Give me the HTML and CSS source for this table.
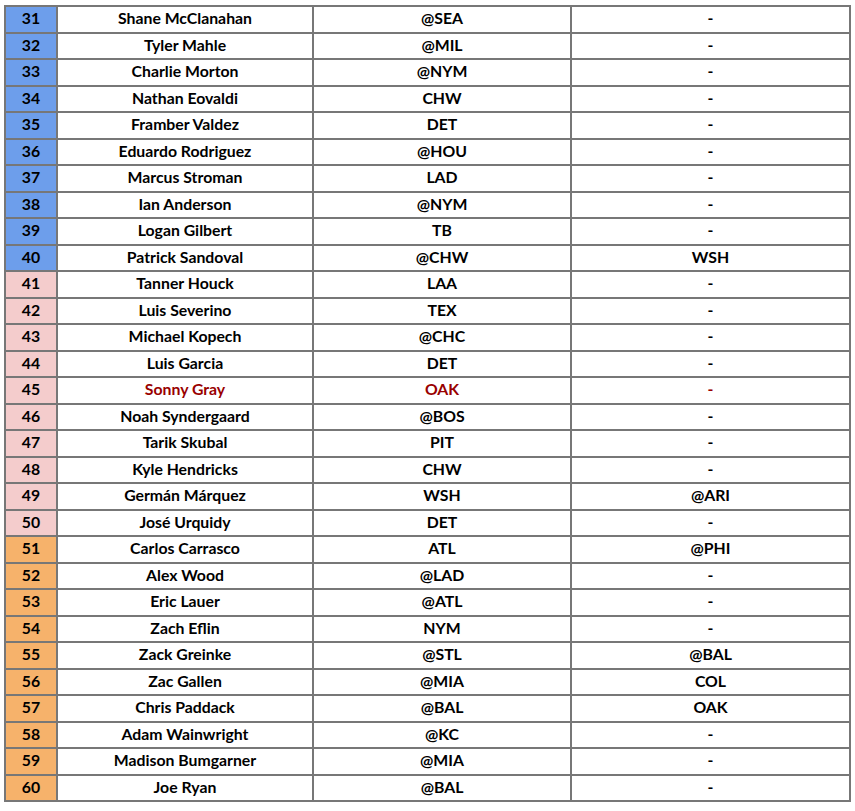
FILE: index.html
```html
<!DOCTYPE html>
<html>
<head>
<meta charset="utf-8">
<link rel="stylesheet" href="styles.css">
</head>
<body>
<table class="ranks">
<colgroup><col class="c-rank"><col class="c-name"><col class="c-opp"><col class="c-opp2"></colgroup>
<tbody>
<tr><td class="rank blue">31</td><td>Shane McClanahan</td><td>@SEA</td><td>-</td></tr>
<tr><td class="rank blue">32</td><td>Tyler Mahle</td><td>@MIL</td><td>-</td></tr>
<tr><td class="rank blue">33</td><td>Charlie Morton</td><td>@NYM</td><td>-</td></tr>
<tr><td class="rank blue">34</td><td>Nathan Eovaldi</td><td>CHW</td><td>-</td></tr>
<tr><td class="rank blue">35</td><td>Framber Valdez</td><td>DET</td><td>-</td></tr>
<tr><td class="rank blue">36</td><td>Eduardo Rodriguez</td><td>@HOU</td><td>-</td></tr>
<tr><td class="rank blue">37</td><td>Marcus Stroman</td><td>LAD</td><td>-</td></tr>
<tr><td class="rank blue">38</td><td>Ian Anderson</td><td>@NYM</td><td>-</td></tr>
<tr><td class="rank blue">39</td><td>Logan Gilbert</td><td>TB</td><td>-</td></tr>
<tr><td class="rank blue">40</td><td>Patrick Sandoval</td><td>@CHW</td><td>WSH</td></tr>
<tr><td class="rank pink">41</td><td>Tanner Houck</td><td>LAA</td><td>-</td></tr>
<tr><td class="rank pink">42</td><td>Luis Severino</td><td>TEX</td><td>-</td></tr>
<tr><td class="rank pink">43</td><td>Michael Kopech</td><td>@CHC</td><td>-</td></tr>
<tr><td class="rank pink">44</td><td>Luis Garcia</td><td>DET</td><td>-</td></tr>
<tr class="hl"><td class="rank pink">45</td><td>Sonny Gray</td><td>OAK</td><td>-</td></tr>
<tr><td class="rank pink">46</td><td>Noah Syndergaard</td><td>@BOS</td><td>-</td></tr>
<tr><td class="rank pink">47</td><td>Tarik Skubal</td><td>PIT</td><td>-</td></tr>
<tr><td class="rank pink">48</td><td>Kyle Hendricks</td><td>CHW</td><td>-</td></tr>
<tr><td class="rank pink">49</td><td>Germán Márquez</td><td>WSH</td><td>@ARI</td></tr>
<tr><td class="rank pink">50</td><td>José Urquidy</td><td>DET</td><td>-</td></tr>
<tr><td class="rank orange">51</td><td>Carlos Carrasco</td><td>ATL</td><td>@PHI</td></tr>
<tr><td class="rank orange">52</td><td>Alex Wood</td><td>@LAD</td><td>-</td></tr>
<tr><td class="rank orange">53</td><td>Eric Lauer</td><td>@ATL</td><td>-</td></tr>
<tr><td class="rank orange">54</td><td>Zach Eflin</td><td>NYM</td><td>-</td></tr>
<tr><td class="rank orange">55</td><td>Zack Greinke</td><td>@STL</td><td>@BAL</td></tr>
<tr><td class="rank orange">56</td><td>Zac Gallen</td><td>@MIA</td><td>COL</td></tr>
<tr><td class="rank orange">57</td><td>Chris Paddack</td><td>@BAL</td><td>OAK</td></tr>
<tr><td class="rank orange">58</td><td>Adam Wainwright</td><td>@KC</td><td>-</td></tr>
<tr><td class="rank orange">59</td><td>Madison Bumgarner</td><td>@MIA</td><td>-</td></tr>
<tr><td class="rank orange">60</td><td>Joe Ryan</td><td>@BAL</td><td>-</td></tr>
</tbody>
</table>
</body>
</html>
```
FILE: styles.css
```css
html, body {
  margin: 0;
  padding: 0;
  background: #ffffff;
}
body {
  padding: 5px 0 0 4px;
}
.ranks {
  border-collapse: collapse;
  table-layout: fixed;
  width: 845px;
  font-family: Lato, "Liberation Sans", sans-serif;
  font-weight: 700;
  font-size: 15.8px;
  color: #000000;
  border: 2px solid #6f6f6f;
}
.c-rank { width: 52px; }
.c-name { width: 256px; }
.c-opp { width: 258px; }
.c-opp2 { width: 279px; }
.ranks td {
  border: 2px solid #777777;
  height: 22.5px;
  padding: 0 0 2px;
  text-align: center;
  vertical-align: middle;
  line-height: 16px;
}
.ranks tr {
  height: 26.5px;
}
.rank.blue { background: #6d9eeb; }
.rank.pink { background: #f4cccc; }
.rank.orange { background: #f6b26b; }
.hl td { color: #990000; }
.hl td.rank { color: #000000; }
```
